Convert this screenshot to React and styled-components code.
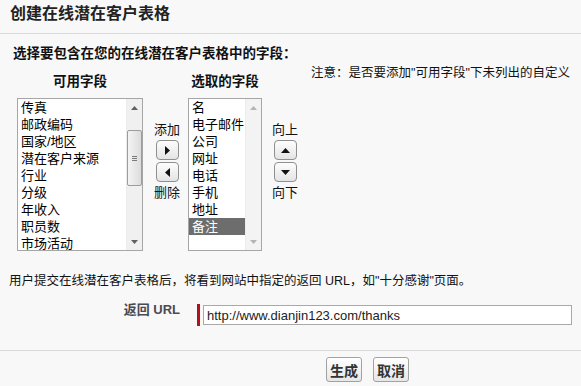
import React from "react";
import styled, {createGlobalStyle} from "styled-components";

const GlobalStyle = createGlobalStyle`
  body {
    margin: 0;
    background: #f8f8f8;
    font-family: "Liberation Sans", "Noto Sans CJK SC", sans-serif;
    color: #000;
    overflow: hidden;
  }
`;

const Page = styled.div`
  width: 581px;
  height: 386px;
  overflow: hidden;
`;

const Header = styled.div`
  padding: 4px 10px 9px;
  border-bottom: 1px solid #d9d9d9;
`;

const Title = styled.h1`
  margin: 0;
  font-size: 16px;
  line-height: 20px;
  font-weight: bold;
  color: #222;
`;

const Section = styled.div`
  padding-left: 13px;
`;

const Subtitle = styled.h2`
  margin: 11px 0 0;
  font-size: 13.5px;
  line-height: 18px;
  font-weight: bold;
  color: #111;
`;

const PickerRow = styled.div`
  display: flex;
  align-items: flex-start;
  padding-left: 4px;
`;

const FieldColumn = styled.div`
  display: flex;
  flex-direction: column;
  flex-shrink: 0;
  width: ${p => p.$width}px;
`;

const ColumnTitle = styled.div`
  margin: 10px 0 8px;
  text-align: center;
  font-size: 13.5px;
  line-height: 17px;
  font-weight: bold;
  white-space: nowrap;
  color: #111;
`;

const ListBox = styled.div`
  display: flex;
  height: 153px;
  box-sizing: border-box;
  border: 1px solid #a6a6a6;
  background: #fff;
  overflow: hidden;
`;

const Items = styled.div`
  flex: 1;
  min-width: 0;
`;

const Item = styled.div`
  height: 17px;
  line-height: 17px;
  padding-left: 3px;
  font-size: 13px;
  white-space: nowrap;
  background: ${p => (p.$selected ? "#6d6d6d" : "transparent")};
  color: ${p => (p.$selected ? "#fff" : "#000")};
`;

const ScrollTrack = styled.div`
  display: flex;
  flex-direction: column;
  flex-shrink: 0;
  width: 15px;
  background: ${p => (p.$disabled ? "#f3f3f3" : "#f0f0f0")};
  border-left: 1px solid #ececec;
`;

const ScrollArrow = styled.div`
  display: flex;
  align-items: center;
  justify-content: center;
  height: 17px;
  color: ${p => (p.$disabled ? "#b4b4b4" : "#606060")};
`;

const ScrollMiddle = styled.div`
  flex: 1;
  display: flex;
  flex-direction: column;
`;

const Thumb = styled.div`
  display: flex;
  flex-direction: column;
  align-items: center;
  justify-content: center;
  gap: 1px;
  margin: ${p => p.$offset}px 0 0 0;
  height: 56px;
  box-sizing: border-box;
  border: 1px solid #9c9c9c;
  border-radius: 2px;
  background: linear-gradient(to right, #f4f4f4, #dcdcdc);
`;

const Grip = styled.div`
  width: 5px;
  height: 1px;
  background: #7a7a7a;
`;

const MoverColumn = styled.div`
  display: flex;
  flex-direction: column;
  align-items: center;
  flex-shrink: 0;
  width: ${p => p.$width}px;
  margin: 59px ${p => p.$right}px 0 11px;
`;

const MoverLabel = styled.div`
  font-size: 13px;
  line-height: 15px;
  white-space: nowrap;
  color: #111;
  margin-top: ${p => p.$top || 0}px;
`;

const ArrowButton = styled.button`
  display: flex;
  align-items: center;
  justify-content: center;
  width: 23px;
  height: 20px;
  padding: 0;
  margin-top: ${p => p.$top}px;
  border: 1px solid #8f8f8f;
  border-radius: 4px;
  background: linear-gradient(#fdfdfd, #e4e4e4);
  color: #111;
`;

const Note = styled.div`
  flex: 1;
  min-width: 0;
  margin-left: 14px;
  font-size: 12.5px;
  line-height: 20px;
  white-space: nowrap;
  overflow: hidden;
  color: #111;
`;

const Instruction = styled.p`
  margin: 22px 0 0 9px;
  font-size: 12.5px;
  line-height: 16px;
  white-space: nowrap;
  color: #111;
`;

const UrlRow = styled.div`
  display: flex;
  align-items: flex-start;
  margin-top: 13px;
`;

const UrlLabel = styled.label`
  width: 180px;
  text-align: right;
  font-size: 13px;
  line-height: 16px;
  font-weight: bold;
  color: #4a4a52;
`;

const Required = styled.div`
  width: 3px;
  height: 22px;
  margin: 2px 3px 0 17px;
  background: #b3121c;
`;

const UrlInput = styled.input`
  width: 369px;
  height: 20px;
  margin-top: 3px;
  box-sizing: border-box;
  padding: 0 3px;
  border: 1px solid #a9a9a9;
  background: #fff;
  font-family: "Liberation Sans", sans-serif;
  font-size: 13px;
  color: #222;
  outline: none;
`;

const Footer = styled.div`
  display: flex;
  gap: 11px;
  margin-top: 24px;
  padding: 6px 0 0 326px;
  border-top: 1px solid #d9d9d9;
`;

const Button = styled.button`
  height: 25px;
  padding: 0 3px;
  border: 1px solid #a2a2a2;
  border-radius: 3px;
  background: linear-gradient(#ffffff, #e6e6e6);
  font-family: "Noto Sans CJK SC", sans-serif;
  font-size: 14px;
  font-weight: bold;
  color: #333;
`;

const Tri = ({dir, size = 7}) => {
  const h = Math.ceil(size / 2);
  if (dir === "left" || dir === "right") {
    const p = dir === "right" ? `0,0 ${h},${size / 2} 0,${size}` : `${h},0 0,${size / 2} ${h},${size}`;
    return (
      <svg width={h} height={size} viewBox={`0 0 ${h} ${size}`}>
        <polygon points={p} fill="currentColor"/>
      </svg>
    );
  }
  const p = dir === "up" ? `0,${h} ${size / 2},0 ${size},${h}` : `0,0 ${size / 2},${h} ${size},0`;
  return (
    <svg width={size} height={h} viewBox={`0 0 ${size} ${h}`}>
      <polygon points={p} fill="currentColor"/>
    </svg>
  );
};

const Scrollbar = ({disabled}) => (
  <ScrollTrack $disabled={disabled}>
    <ScrollArrow $disabled={disabled}><Tri dir="up" size={7}/></ScrollArrow>
    <ScrollMiddle>
      {!disabled && (
        <Thumb $offset={14}>
          <Grip/><Grip/><Grip/>
        </Thumb>
      )}
    </ScrollMiddle>
    <ScrollArrow $disabled={disabled}><Tri dir="down" size={7}/></ScrollArrow>
  </ScrollTrack>
);

const available = ["传真", "邮政编码", "国家/地区", "潜在客户来源", "行业", "分级", "年收入", "职员数", "市场活动"];
const chosen = ["名", "电子邮件", "公司", "网址", "电话", "手机", "地址", "备注"];

const App = () => (
  <Page>
    <GlobalStyle/>
    <Header>
      <Title>创建在线潜在客户表格</Title>
    </Header>
    <Section>
      <Subtitle>选择要包含在您的在线潜在客户表格中的字段：</Subtitle>
      <PickerRow>
        <FieldColumn $width={126}>
          <ColumnTitle>可用字段</ColumnTitle>
          <ListBox>
            <Items>
              {available.map(name => <Item key={name}>{name}</Item>)}
            </Items>
            <Scrollbar/>
          </ListBox>
        </FieldColumn>
        <MoverColumn $width={26} $right={8}>
          <MoverLabel>添加</MoverLabel>
          <ArrowButton $top={3}><Tri dir="right" size={9}/></ArrowButton>
          <ArrowButton $top={2}><Tri dir="left" size={9}/></ArrowButton>
          <MoverLabel $top={3}>删除</MoverLabel>
        </MoverColumn>
        <FieldColumn $width={74}>
          <ColumnTitle>选取的字段</ColumnTitle>
          <ListBox>
            <Items>
              {chosen.map(name => <Item key={name} $selected={name === "备注"}>{name}</Item>)}
            </Items>
            <Scrollbar disabled/>
          </ListBox>
        </FieldColumn>
        <MoverColumn $width={24} $right={0}>
          <MoverLabel>向上</MoverLabel>
          <ArrowButton $top={3}><Tri dir="up" size={9}/></ArrowButton>
          <ArrowButton $top={2}><Tri dir="down" size={9}/></ArrowButton>
          <MoverLabel $top={3}>向下</MoverLabel>
        </MoverColumn>
        <Note>注意：是否要添加"可用字段"下未列出的自定义</Note>
      </PickerRow>
    </Section>
    <Instruction>用户提交在线潜在客户表格后，将看到网站中指定的返回 URL，如"十分感谢"页面。</Instruction>
    <UrlRow>
      <UrlLabel>返回 URL</UrlLabel>
      <Required/>
      <UrlInput defaultValue="http://www.dianjin123.com/thanks"/>
    </UrlRow>
    <Footer>
      <Button>生成</Button>
      <Button>取消</Button>
    </Footer>
  </Page>
);

export default App;
